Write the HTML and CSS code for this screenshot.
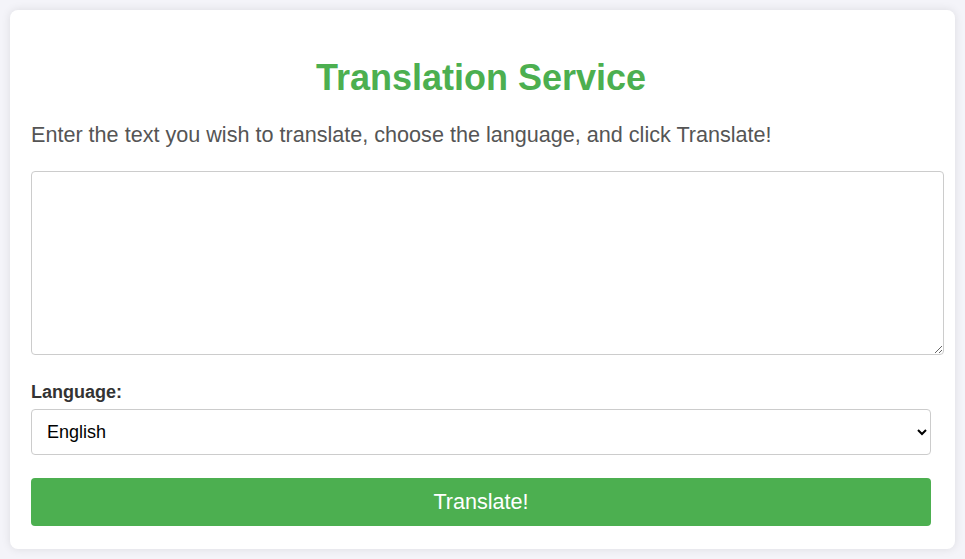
FILE: index.html
```html
<!DOCTYPE html>
<html lang="en">
<head>
<meta charset="utf-8">
<title>Translation Service</title>
<link rel="stylesheet" href="styles.css">
</head>
<body>
<div class="container">
  <h1 class="title">Translation Service</h1>
  <p class="intro">Enter the text you wish to translate, choose the language, and click Translate!</p>
  <textarea class="text-input"></textarea>
  <label class="lang-label" for="lang">Language:</label>
  <select class="lang-select" id="lang">
    <option>English</option>
    <option>Spanish</option>
    <option>French</option>
  </select>
  <button class="translate-btn">Translate!</button>
</div>
</body>
</html>
```

FILE: styles.css
```css
html, body {
  margin: 0;
  padding: 0;
}
body {
  background: #f4f4f9;
  font-family: "Liberation Sans", Arial, sans-serif;
  font-size: 18px;
  padding: 10px;
}
.container {
  background: #fff;
  border-radius: 8px;
  box-shadow: 0 0 10px rgba(0,0,0,0.1);
  padding: 20px 24px 23px 21px;
  display: flex;
  flex-direction: column;
  align-items: flex-start;
}
.title {
  align-self: stretch;
  text-align: center;
  color: #4caf50;
  font-size: 36px;
  font-weight: bold;
  margin: 27px 0 0;
  line-height: 41px;
}
.intro {
  color: #555;
  font-size: 21.6px;
  margin: 24px 0 0;
  line-height: 25px;
}
.text-input {
  box-sizing: border-box;
  width: 913px;
  height: 184px;
  margin: 24px 0 0;
  padding: 5px;
  border: 1px solid #ccc;
  border-radius: 4px;
  font-family: inherit;
  font-size: 18px;
  resize: vertical;
}
.lang-label {
  font-weight: bold;
  font-size: 18px;
  color: #333;
  margin-top: 27px;
  line-height: 21px;
}
.lang-select {
  align-self: stretch;
  box-sizing: border-box;
  height: 46px;
  margin-top: 6px;
  padding: 0 11px;
  border: 1px solid #ccc;
  border-radius: 4px;
  background: #fff;
  font-family: inherit;
  font-size: 18px;
  color: #000;
}
.translate-btn {
  align-self: stretch;
  height: 48px;
  margin-top: 23px;
  border: none;
  border-radius: 4px;
  background: #4caf50;
  color: #fff;
  font-family: inherit;
  font-size: 21.6px;
}
```
